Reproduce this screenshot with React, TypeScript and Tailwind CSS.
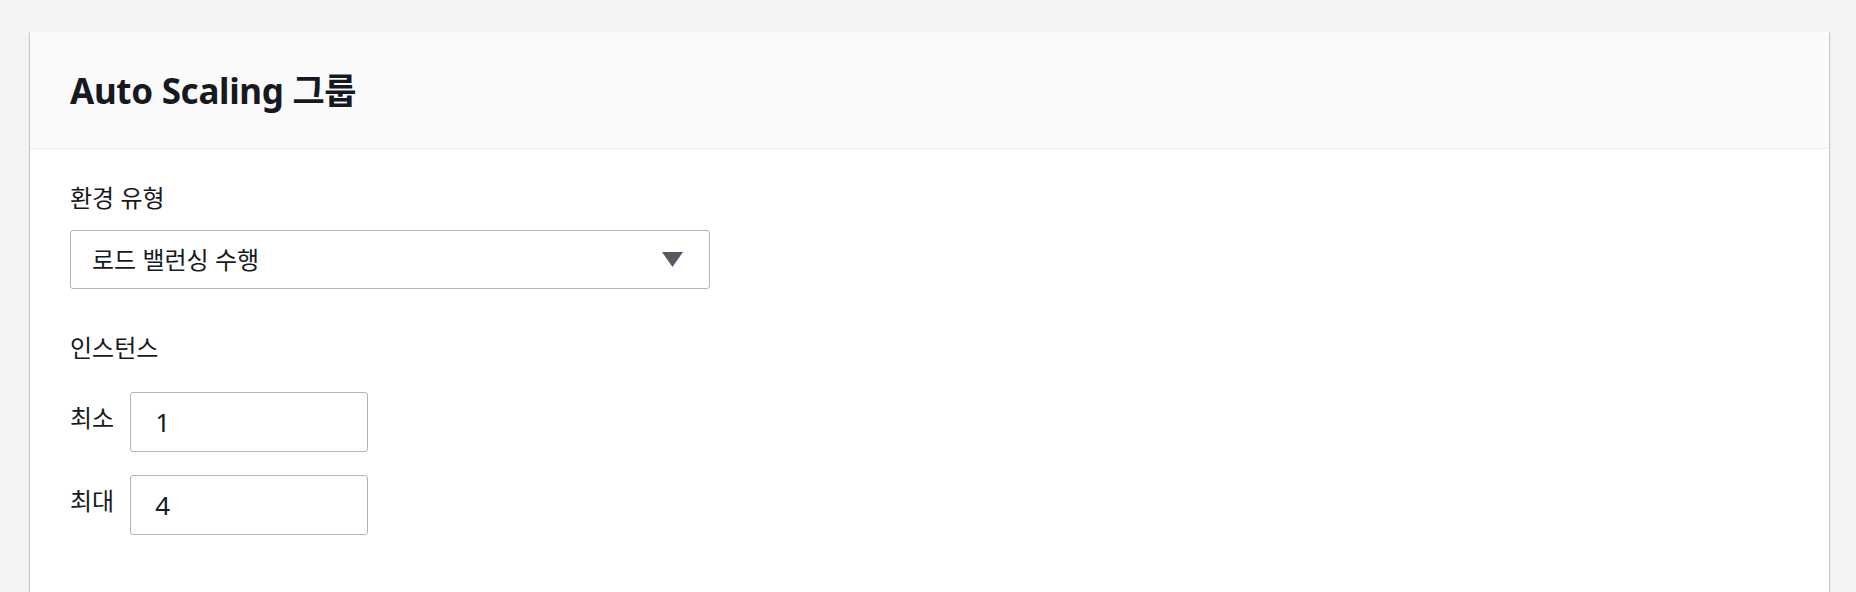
import React from "react";

const font = { fontFamily: '"Noto Sans", "Noto Sans CJK KR", sans-serif' };

export default function App() {
  return (
    <div className="min-h-[592px] w-full bg-[#f2f3f3] pt-[32px] pl-[30px] pr-[27px] overflow-hidden" style={font}>
      <div className="bg-white shadow-[0_1px_1px_0_rgba(0,28,36,0.3),1px_1px_1px_0_rgba(0,28,36,0.15),-1px_1px_1px_0_rgba(0,28,36,0.15)] min-h-[600px]">
        <div className="h-[117px] bg-[#fafafa] border-b border-[#eaeded] flex items-center pl-[40px]">
          <h2 className="text-[35px] font-bold text-[#16191f] leading-none tracking-[-0.3px]">Auto Scaling 그룹</h2>
        </div>
        <div className="pl-[40px] pt-[34px] text-[#16191f]">
          <div className="text-[24px] leading-[30px]">환경 유형</div>
          <div className="mt-[17px] w-[640px] h-[59px] border-[1.5px] border-[#aab7b8] rounded-[3px] flex items-center justify-between pl-[21px] pr-[26px]">
            <span className="text-[24px] leading-[30px]">로드 밸런싱 수행</span>
            <svg width="21" height="15" viewBox="0 0 21 15">
              <polygon points="0,0 21,0 10.5,15" fill="#545b64" />
            </svg>
          </div>
          <div className="mt-[44px] text-[24px] leading-[30px]">인스턴스</div>
          <div className="mt-[29px] flex items-start gap-[16px]">
            <span className="text-[24px] leading-[30px] mt-[11px]">최소</span>
            <div className="w-[238px] h-[60px] border-[1.5px] border-[#aab7b8] rounded-[3px] flex items-center pl-[24px] text-[26px]">1</div>
          </div>
          <div className="mt-[23px] flex items-start gap-[16px]">
            <span className="text-[24px] leading-[30px] mt-[11px]">최대</span>
            <div className="w-[238px] h-[60px] border-[1.5px] border-[#aab7b8] rounded-[3px] flex items-center pl-[24px] text-[26px]">4</div>
          </div>
        </div>
      </div>
    </div>
  );
}
